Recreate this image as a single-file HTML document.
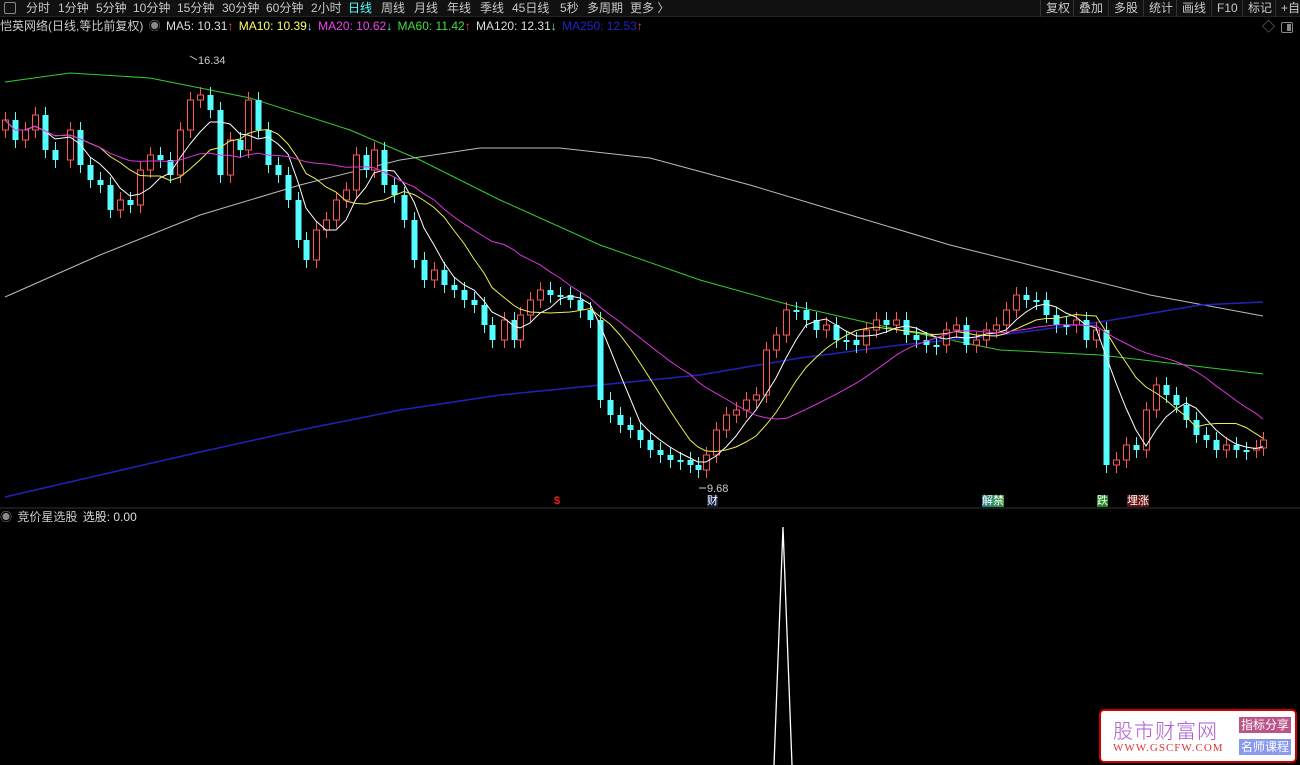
<!DOCTYPE html>
<html><head><meta charset="utf-8">
<style>
*{margin:0;padding:0;box-sizing:border-box}
body{width:1300px;height:765px;background:#000;overflow:hidden;font-family:"Liberation Sans","Noto Sans CJK SC",sans-serif;color:#ccc;position:relative}
.top{position:absolute;left:0;top:0;width:1300px;height:17px;background:#111;border-bottom:1px solid #222;font-size:12px;line-height:17px}
.top span{position:absolute;top:0;color:#c8c8c8}
.rb{position:absolute;top:0;height:17px;border-left:1px solid #333;color:#c8c8c8;padding:0 5px;white-space:nowrap}
.leg{position:absolute;top:18px;left:0;height:16px;font-size:12px;line-height:16px;white-space:nowrap}
.leg span{margin-right:2px}
.lbl{position:absolute;font-size:11px;line-height:12px}
svg{position:absolute;left:0;top:0}
</style></head><body>
<div class="top">
<span style="left:4px;top:2px;width:12px;height:12px;border:1px solid #888;border-radius:2px"></span>
<span style="left:26px">分时</span><span style="left:58px">1分钟</span><span style="left:96px">5分钟</span><span style="left:133px">10分钟</span><span style="left:177px">15分钟</span><span style="left:222px">30分钟</span><span style="left:266px">60分钟</span><span style="left:311px">2小时</span><span style="left:348px;color:#5ff">日线</span><span style="left:381px">周线</span><span style="left:414px">月线</span><span style="left:447px">年线</span><span style="left:480px">季线</span><span style="left:512px">45日线</span><span style="left:560px">5秒</span><span style="left:587px">多周期</span><span style="left:630px">更多 〉</span>
<div class="rb" style="left:1040px">复权</div><div class="rb" style="left:1073px">叠加</div><div class="rb" style="left:1108px">多股</div><div class="rb" style="left:1143px">统计</div><div class="rb" style="left:1176px">画线</div><div class="rb" style="left:1211px">F10</div><div class="rb" style="left:1242px">标记</div><div class="rb" style="left:1275px">+自选</div>
</div>
<div class="leg"><span style="color:#ccc">恺英网络(日线,等比前复权)</span> <span style="color:#888">◉</span> <span style="color:#ddd">MA5: 10.31<b style="color:#f44">↑</b></span> <span style="color:#ff6">MA10: 10.39<b style="color:#5ff">↓</b></span> <span style="color:#e4e">MA20: 10.62<b style="color:#5ff">↓</b></span> <span style="color:#4d4">MA60: 11.42<b style="color:#f44">↑</b></span> <span style="color:#ddd">MA120: 12.31<b style="color:#5ff">↓</b></span> <span style="color:#22c">MA250: 12.53<b style="color:#f44">↑</b></span></div>
<div class="lbl" style="left:1262px;top:21px;color:#888;font-size:13px">◇</div>
<div style="position:absolute;left:1281px;top:22px;width:12px;height:11px;border:1px solid #888;border-radius:2px"><div style="position:absolute;right:1px;top:1px;width:4px;height:7px;background:#888"></div></div>
<svg width="1300" height="765" id="s">
<line x1="0" y1="508" x2="1300" y2="508" stroke="#333"/>
<polyline fill="none" stroke="#3c3" stroke-width="1" points="5,82 70,73 150,78 250,98 350,130 420,160 500,200 600,245 700,280 790,305 900,330 1000,350 1100,355 1263,374"/>
<polyline fill="none" stroke="#bbb" stroke-width="1" points="5,297 100,255 200,215 300,185 400,160 480,148 560,148 650,158 750,185 850,215 950,245 1050,270 1150,295 1263,316"/>
<polyline fill="none" stroke="#22b" stroke-width="1.5" points="5,497 100,475 200,452 300,430 400,410 500,395 600,385 700,375 800,358 900,345 1000,335 1100,322 1200,305 1263,302"/>
<polyline fill="none" stroke="#fff" stroke-width="1.3" points="774,765 783,527 792,765"/>
<g id="c"></g>
<text x="198" y="64" fill="#ccc" font-size="11" font-family="Liberation Sans">16.34</text>
<polyline points="197,60 190,56" stroke="#ccc" fill="none"/>
<text x="707" y="492" fill="#ccc" font-size="11" font-family="Liberation Sans">9.68</text>
<polyline points="706,488 699,488" stroke="#ccc" fill="none"/>
</svg>
<div class="lbl" style="left:554px;top:495px;color:#e22;font-weight:bold">$</div>
<div class="lbl" style="left:707px;top:495px;color:#fff;background:#124">财</div>
<div class="lbl" style="left:982px;top:495px;color:#fff;background:linear-gradient(90deg,#278,#393)">解禁</div>
<div class="lbl" style="left:1097px;top:495px;color:#fff;background:#282">跌</div>
<div class="lbl" style="left:1127px;top:495px;color:#fff;background:#611">埋涨</div>
<div class="leg" style="top:509px"><span style="color:#888">◉</span> <span>竞价星选股</span> <span style="color:#ddd">选股: 0.00</span></div>
<div style="position:absolute;left:1099px;top:709px;width:198px;height:54px;background:#fff;border:2px solid #c00;border-radius:5px">
<div style="position:absolute;left:12px;top:4px;font-size:20px;color:#a5c;letter-spacing:1px;font-family:'Noto Sans CJK SC',sans-serif;font-weight:300">股市财富网</div>
<div style="position:absolute;left:12px;top:31px;font-size:11px;color:#d33;font-family:'Liberation Serif',serif;letter-spacing:1px">WWW.GSCFW.COM</div>
<div style="position:absolute;left:138px;top:6px;width:52px;height:16px;background:#b58;color:#fff;font-size:12px;line-height:16px;text-align:center">指标分享</div>
<div style="position:absolute;left:138px;top:28px;width:52px;height:16px;background:#89e;color:#fff;font-size:12px;line-height:16px;text-align:center">名师课程</div>
</div>
<script>
var P=[[5,120],[15,140],[25,130],[35,115],[45,150],[55,160],[70,130],[80,165],[90,180],[100,185],[110,210],[120,200],[130,205],[140,170],[150,155],[160,160],[170,175],[180,130],[190,100],[200,95],[210,110],[220,175],[230,140],[240,150],[248,100],[258,130],[268,165],[278,175],[288,200],[298,240],[306,260],[316,230],[326,220],[336,200],[346,190],[356,155],[366,170],[374,150],[384,185],[394,195],[404,220],[414,260],[424,280],[434,270],[444,285],[454,290],[464,300],[474,305],[484,325],[492,340],[504,320],[514,340],[520,315],[530,300],[540,290],[550,295],[560,295],[570,300],[580,310],[590,320],[600,400],[610,415],[620,425],[630,430],[640,440],[650,450],[660,455],[670,460],[680,460],[690,465],[698,470],[706,455],[716,430],[726,415],[736,410],[746,400],[756,395],[766,350],[776,335],[786,310],[796,310],[806,320],[816,330],[826,325],[836,340],[846,340],[856,345],[866,330],[876,320],[886,325],[896,320],[906,335],[916,340],[926,345],[936,345],[946,330],[956,325],[966,345],[976,340],[986,330],[996,325],[1006,310],[1016,295],[1026,300],[1036,300],[1046,315],[1056,325],[1066,325],[1076,320],[1086,340],[1096,330],[1106,465],[1116,460],[1126,445],[1136,450],[1146,410],[1156,385],[1166,395],[1176,405],[1186,420],[1196,435],[1206,440],[1216,450],[1226,445],[1236,450],[1246,450],[1256,448],[1263,440]];
var g=document.getElementById('c'),h='',prev=P[0][1]+10;
for(var i=0;i<P.length;i++){var x=P[i][0],c=P[i][1],o=prev;var t=Math.min(o,c),b=Math.max(o,c);if(b-t<2)b=t+2;var up=c<o;var col=up?'#f55':'#5ff';
h+='<line x1="'+(x+.5)+'" y1="'+(t-8)+'" x2="'+(x+.5)+'" y2="'+(b+8)+'" stroke="'+col+'"/>';
h+=up?'<rect x="'+(x-2.5)+'" y="'+t+'" width="6" height="'+(b-t)+'" fill="#000" stroke="'+col+'"/>':'<rect x="'+(x-2.5)+'" y="'+t+'" width="6" height="'+(b-t)+'" fill="'+col+'"/>';prev=c;}
function ma(n,col){var pts=[];for(var i=0;i<P.length;i++){var s=0,k=0;for(var j=Math.max(0,i-n+1);j<=i;j++){s+=P[j][1];k++;}pts.push(P[i][0]+','+(s/k).toFixed(1));}h+='<polyline fill="none" stroke="'+col+'" points="'+pts.join(' ')+'"/>';}
ma(5,'#fff');ma(10,'#ee5');ma(20,'#d3d');
g.innerHTML=h;
</script>
</body></html>
